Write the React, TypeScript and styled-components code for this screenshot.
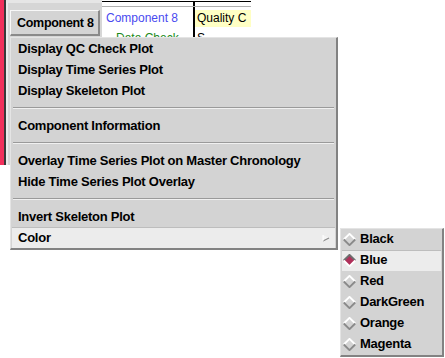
import styled, { createGlobalStyle } from 'styled-components';

const GlobalStyle = createGlobalStyle`
  html, body { margin: 0; padding: 0; background: #fff; }
  body { font-family: "Liberation Sans", Arial, sans-serif; }
`;

type Entry = { label: string; active?: boolean; sub?: boolean } | 'sep';

const entries: Entry[] = [
  { label: 'Display QC Check Plot' },
  { label: 'Display Time Series Plot' },
  { label: 'Display Skeleton Plot' },
  'sep',
  { label: 'Component Information' },
  'sep',
  { label: 'Overlay Time Series Plot on Master Chronology' },
  { label: 'Hide Time Series Plot Overlay' },
  'sep',
  { label: 'Invert Skeleton Plot' },
  { label: 'Color', active: true, sub: true },
];

const colors = ['Black', 'Blue', 'Red', 'DarkGreen', 'Orange', 'Magenta'];
const selected = 'Blue';

const Diamond = ({ on }: { on: boolean }) => (
  <svg width="13" height="13" viewBox="0 0 13 13">
    <polygon points="6.5,0.5 12.5,6.5 6.5,12.5 0.5,6.5" fill={on ? '#b0305a' : '#d3d3d3'} />
    <polyline points="0.8,6.5 6.5,0.8 12.2,6.5" fill="none" stroke={on ? '#6e6e6e' : '#ffffff'} strokeWidth="1.8" />
    <polyline points="0.8,6.5 6.5,12.2 12.2,6.5" fill="none" stroke={on ? '#ffffff' : '#8a8a8a'} strokeWidth="1.8" />
  </svg>
);

const Arrow = () => (
  <svg width="8" height="8" viewBox="0 0 8 8">
    <polygon points="1,1 7,4 1,7" fill="#f4f4f4" />
    <polyline points="1,7 7,4" fill="none" stroke="#8a8a8a" strokeWidth="1.2" />
    <polyline points="1,7 1,1" fill="none" stroke="#ffffff" strokeWidth="1" />
  </svg>
);

const App = () => {
  return (
    <Screen>
      <GlobalStyle />
      <BackWindow>
        <Strip />
        <Edge />
        <Sidebar>
          <Button>Component 8</Button>
        </Sidebar>
        <Table>
          <NameCol>
            <Cell color="#4a4af0">Component 8</Cell>
            <SubCell color="#1a8a1a">Data Check</SubCell>
          </NameCol>
          <QualityCol>
            <HeadCell>Quality C</HeadCell>
            <SubCell color="#000" $indent={2}>S</SubCell>
          </QualityCol>
        </Table>
      </BackWindow>

      <Menu>
        {entries.map((e, i) =>
          e === 'sep' ? (
            <Separator key={i} />
          ) : (
            <Item key={i} $active={e.active}>
              <span>{e.label}</span>
              {e.sub && <Arrow />}
            </Item>
          )
        )}
      </Menu>

      <SubMenu>
        {colors.map(c => (
          <SubItem key={c} $active={c === selected}>
            <Diamond on={c === selected} />
            <span>{c}</span>
          </SubItem>
        ))}
      </SubMenu>
    </Screen>
  );
};

const Screen = styled.div`
  position: relative;
  width: 445px;
  height: 358px;
  overflow: hidden;
  background: #fff;
`;

const BackWindow = styled.div`
  display: flex;
  height: 165px;
`;

const Strip = styled.div` width: 4px; background: #f2305c; `;
const Edge = styled.div` width: 2px; background: #3a3a3a; `;

const Sidebar = styled.div`
  width: 96px;
  box-sizing: border-box;
  background: #d6d6d6;
  border-top: 3px solid #e6e6e6;
  border-left: 2px solid #ececec;
  padding-top: 7px;
  padding-left: 2px;
`;

const Button = styled.div`
  width: 90px;
  height: 26px;
  box-sizing: border-box;
  display: flex;
  align-items: center;
  padding-left: 6px;
  background: #d4d4d4;
  border-top: 1px solid #f8f8f8;
  border-left: 1px solid #f8f8f8;
  border-right: 2px solid #8a8a8a;
  border-bottom: 2px solid #8a8a8a;
  font-weight: bold;
  font-size: 12.5px;
  letter-spacing: -0.3px;
  color: #000;
  white-space: nowrap;
`;

const Table = styled.div`
  display: flex;
  width: 149px;
  border-top: 1px solid #000;
  margin-top: 1px;
  position: relative;
  &::before {
    content: '';
    position: absolute;
    left: 0; right: 0; top: 4px;
    height: 1px;
    background: #b0b0b0;
  }
`;

const NameCol = styled.div`
  width: 91px;
  padding-top: 8px;
  display: flex;
  flex-direction: column;
`;

const QualityCol = styled.div`
  flex: 1;
  border-left: 2px solid #000;
  padding-top: 8px;
  display: flex;
  flex-direction: column;
  overflow: hidden;
`;

const Cell = styled.div<{ color: string }>`
  height: 17px;
  line-height: 17px;
  padding-left: 4px;
  font-size: 12px;
  color: ${p => p.color};
  white-space: nowrap;
`;

const HeadCell = styled.div`
  height: 17px;
  line-height: 17px;
  padding-left: 2px;
  font-size: 12px;
  background: #ffffc4;
  color: #000;
  white-space: nowrap;
`;

const SubCell = styled.div<{ color: string; $indent?: number }>`
  margin-top: 4px;
  padding-left: ${p => p.$indent ?? 14}px;
  font-size: 12px;
  line-height: 14px;
  color: ${p => p.color};
  white-space: nowrap;
`;

const Menu = styled.div`
  position: absolute;
  left: 10px;
  top: 37px;
  width: 328px;
  box-sizing: border-box;
  background: #d3d3d3;
  border-top: 1px solid #e4e4e4;
  border-left: 1px solid #e4e4e4;
  border-right: 2px solid #828282;
  border-bottom: 2px solid #828282;
`;

const Item = styled.div<{ $active?: boolean }>`
  height: 21px;
  box-sizing: border-box;
  margin: 0 1px;
  padding: 0 5px 2px 6px;
  display: flex;
  align-items: center;
  justify-content: space-between;
  font-weight: bold;
  font-size: 13px;
  letter-spacing: -0.25px;
  color: #000;
  white-space: nowrap;
  background: ${p => (p.$active ? '#ececec' : 'transparent')};
  border-top: 1px solid ${p => (p.$active ? '#bdbdbd' : 'transparent')};
  svg { margin-top: 2px; }
`;

const Separator = styled.div`
  height: 14px;
  display: flex;
  align-items: center;
  padding: 0 2px;
  &::after {
    content: '';
    flex: 1;
    height: 1px;
    background: #9a9a9a;
    border-bottom: 1px solid #f0f0f0;
  }
`;

const SubMenu = styled.div`
  position: absolute;
  left: 340px;
  top: 228px;
  width: 104px;
  box-sizing: border-box;
  background: #d3d3d3;
  border-top: 1px solid #e4e4e4;
  border-left: 1px solid #e4e4e4;
  border-right: 2px solid #828282;
  border-bottom: 2px solid #828282;
`;

const SubItem = styled.div<{ $active?: boolean }>`
  height: 21px;
  box-sizing: border-box;
  margin: 0 1px;
  padding: 0 0 4px 1px;
  display: flex;
  align-items: center;
  gap: 4px;
  font-weight: bold;
  font-size: 13px;
  letter-spacing: -0.25px;
  color: #000;
  white-space: nowrap;
  background: ${p => (p.$active ? '#ececec' : 'transparent')};
  border-top: 1px solid ${p => (p.$active ? '#bdbdbd' : 'transparent')};
  svg { margin-top: 2px; }
`;

export default App;
